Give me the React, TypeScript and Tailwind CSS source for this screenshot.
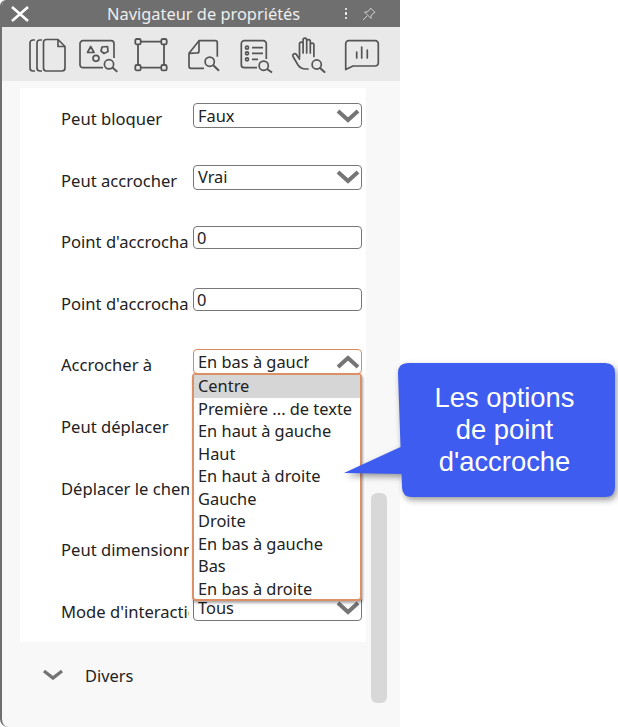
const font = { fontFamily: '"Noto Sans", "Open Sans", sans-serif' };

const options = [
  'Centre',
  'Première ... de texte',
  'En haut à gauche',
  'Haut',
  'En haut à droite',
  'Gauche',
  'Droite',
  'En bas à gauche',
  'Bas',
  'En bas à droite',
];

function Chevron({ up = false }: { up?: boolean }) {
  return (
    <svg width="24" height="14" viewBox="0 0 24 14" fill="none" stroke="#757575" strokeWidth="4">
      <path d={up ? 'M2 12 L12 3 L22 12' : 'M2 2 L12 11 L22 2'} />
    </svg>
  );
}

function Select({ value, open = false }: { value: string; open?: boolean }) {
  return (
    <div
      className={`flex h-[25px] w-[169px] items-center justify-between rounded-[4px] border bg-white pl-[4px] pr-[1px] ${open ? 'border-[#d98a5f]' : 'border-[#777777]'}`}
    >
      <span className="w-[111px] overflow-hidden whitespace-nowrap text-[16.4px] leading-[22px] text-[#222222]">
        {value}
      </span>
      <Chevron up={open} />
    </div>
  );
}

function Label({ text }: { text: string }) {
  return (
    <div className="mr-[4px] mt-[5px] w-[128px] overflow-hidden whitespace-nowrap text-[16.6px] leading-[22px] text-[#222222]">
      {text}
    </div>
  );
}

function Field({ value }: { value: string }) {
  return (
    <div className="flex h-[23px] w-[169px] items-center rounded-[4px] border border-[#777777] bg-white pl-[3px] pt-[1px] text-[16.4px] leading-[22px] text-[#222222]">
      {value}
    </div>
  );
}

function Toolbar() {
  return (
    <div className="flex h-[54px] items-center gap-[12.6px] bg-[#e9e9e9] pl-[24px]">
      <svg width="40" height="40" viewBox="0 0 40 40" fill="none" stroke="#555555" strokeWidth="1.7" strokeLinejoin="round">
        <path d="M9 6 H7 a3 3 0 0 0 -3 3 V34 a3 3 0 0 0 3 3 H9" />
        <path d="M16 6 H14 a3 3 0 0 0 -3 3 V34 a3 3 0 0 0 3 3 H16" />
        <path d="M20.5 5.5 H32 L39 12.5 V34 a3 3 0 0 1 -3 3 H20.5 a3 3 0 0 1 -3 -3 V8.5 a3 3 0 0 1 3 -3 Z" />
        <path d="M32 5.5 V12.5 H39" />
      </svg>
      <svg width="40" height="40" viewBox="0 0 40 40" fill="none" stroke="#555555" strokeWidth="1.7" strokeLinejoin="round">
        <path d="M24 33.7 H4 a3 3 0 0 1 -3 -3 V9.7 a3 3 0 0 1 3 -3 H32 a3 3 0 0 1 3 3 V24" />
        <path d="M11.7 12.5 L15 18.5 H8.5 Z" />
        <path d="M23 13 L28.5 12.5 L29 17.5 L25 19.5 L22 17 Z" />
        <circle cx="17" cy="24.3" r="3" />
        <circle cx="30" cy="30.3" r="4.6" />
        <path d="M33.4 33.6 L38.3 37.7" strokeWidth="2" />
      </svg>
      <svg width="40" height="40" viewBox="0 0 40 40" fill="none" stroke="#555555" strokeWidth="1.8">
        <path d="M7 7.7 H33 M7 33.7 H33 M7 7.7 V33.7 M33 7.7 V33.7" />
        <rect x="4.3" y="5" width="5.4" height="5.4" rx="1.5" fill="#e9e9e9" />
        <rect x="30.3" y="5" width="5.4" height="5.4" rx="1.5" fill="#e9e9e9" />
        <rect x="4.3" y="31" width="5.4" height="5.4" rx="1.5" fill="#e9e9e9" />
        <rect x="30.3" y="31" width="5.4" height="5.4" rx="1.5" fill="#e9e9e9" />
      </svg>
      <svg width="40" height="40" viewBox="0 0 40 40" fill="none" stroke="#555555" strokeWidth="1.7" strokeLinejoin="round">
        <path d="M20 34.3 H7 a2 2 0 0 1 -2 -2 V19.3 L15 6.7 H31.3 a2 2 0 0 1 2 2 V22.7" />
        <path d="M15 6.7 V17 a2 2 0 0 1 -2 2 L5 19.3" />
        <circle cx="25.7" cy="27.7" r="4.6" />
        <path d="M29 31 L35 36.7" strokeWidth="2" />
      </svg>
      <svg width="40" height="40" viewBox="0 0 40 40" fill="none" stroke="#555555" strokeWidth="1.7" strokeLinejoin="round">
        <path d="M21 33.7 H8.3 a3 3 0 0 1 -3 -3 V9.7 a3 3 0 0 1 3 -3 H27.3 a3 3 0 0 1 3 3 V25" />
        <circle cx="11" cy="13.7" r="1.5" />
        <circle cx="11" cy="19.3" r="1.5" />
        <circle cx="11" cy="25.3" r="1.5" />
        <path d="M16 13.7 H27 M16 19.3 H27 M16 25.3 H22" />
        <circle cx="27.7" cy="31.7" r="4.6" />
        <path d="M31 35 L36 38.5" strokeWidth="2" />
      </svg>
      <svg width="40" height="40" viewBox="0 0 40 40" fill="none" stroke="#555555" strokeWidth="1.7" strokeLinejoin="round" strokeLinecap="round">
        <path d="M10.5 23 V10 a1.8 1.8 0 0 1 3.6 0 V19 V6 a1.8 1.8 0 0 1 3.6 0 V19 V7.5 a1.8 1.8 0 0 1 3.6 0 V19 V11 a1.8 1.8 0 0 1 3.6 0 V22.5" />
        <path d="M10.5 25 L7 20 a2 2 0 0 0 -3 2.5 L9 31 c2 3 5 4 8 4 h2" />
        <circle cx="27.7" cy="30.5" r="4.6" />
        <path d="M31 34 L35.5 38" strokeWidth="2" />
      </svg>
      <svg width="40" height="40" viewBox="0 0 40 40" fill="none" stroke="#555555" strokeWidth="1.7" strokeLinejoin="round" strokeLinecap="round">
        <path d="M6.7 6.7 H33.3 a3 3 0 0 1 3 3 V29 a3 3 0 0 1 -3 3 H11 L3.7 35.5 V9.7 a3 3 0 0 1 3 -3 Z" />
        <path d="M14.7 18 V24 M19.7 13 V24 M25.3 16 V24" />
      </svg>
    </div>
  );
}

export default function App() {
  return (
    <div className="relative h-[727px] w-[618px] overflow-hidden bg-white" style={font}>
      <div className="flex h-[727px] w-[400px] flex-col overflow-hidden rounded-tl-[6px] rounded-bl-[8px] border-l-2 border-[#6f6f6f] bg-[#f8f8f8]">
        <div className="-ml-[2px] flex h-[27px] items-center bg-[#6f6f6f] pl-[11px]">
          <svg width="18" height="16" viewBox="0 0 18 16" fill="none" stroke="#ffffff" strokeWidth="2.6">
            <path d="M1 1 L17 15 M17 1 L1 15" />
          </svg>
          <div className="ml-[78px] w-[193px] whitespace-nowrap text-[16.4px] leading-[22px] text-[#eeeeee]">Navigateur de propriétés</div>
          <div className="ml-[44.5px] flex flex-col gap-[2px]">
            <span className="h-[2.5px] w-[2.5px] rounded-full bg-white" />
            <span className="h-[2.5px] w-[2.5px] rounded-full bg-white" />
            <span className="h-[2.5px] w-[2.5px] rounded-full bg-white" />
          </div>
          <svg className="ml-[15px]" width="14" height="14" viewBox="0 0 14 14" fill="none" stroke="#cfcfcf" strokeWidth="1">
            <path d="M8.5 1 L13 5.5 L11.5 6 L9 9 L9 11.5 L2.5 5 L5 5 L8 2.5 Z M5 9 L1 13" />
          </svg>
        </div>
        <Toolbar />
        <div className="flex flex-1 pl-[18px] pt-[7px]">
          <div className="flex w-[346px] flex-col">
            <div className="flex flex-col gap-[36.6px] bg-white pb-[21px] pl-[41px] pt-[15px]">
              <div className="flex h-[25px]">
                <Label text="Peut bloquer" />
                <Select value="Faux" />
              </div>
              <div className="flex h-[25px]">
                <Label text="Peut accrocher" />
                <Select value="Vrai" />
              </div>
              <div className="flex h-[25px]">
                <Label text="Point d'accrochage X" />
                <Field value="0" />
              </div>
              <div className="flex h-[25px]">
                <Label text="Point d'accrochage Y" />
                <Field value="0" />
              </div>
              <div className="relative z-10 flex h-[25px]">
                <Label text="Accrocher à" />
                <Select value="En bas à gauche" open />
                <div className="absolute left-[131px] top-[24px] h-[228px] w-[170px] rounded-[4px] border-2 border-[#dc9068] bg-white text-[16.4px] text-[#222222] shadow-[1px_2px_3px_rgba(0,0,0,0.35)]">
                  {options.map((o, i) => (
                    <div
                      key={o}
                      className={`h-[22.5px] whitespace-nowrap pl-[4px] leading-[21px] ${i === 0 ? 'bg-[#d6d6d6]' : ''}`}
                    >
                      {o}
                    </div>
                  ))}
                </div>
              </div>
              <div className="flex h-[25px]">
                <Label text="Peut déplacer" />
                <Select value="Vrai" />
              </div>
              <div className="flex h-[25px]">
                <Label text="Déplacer le chemin" />
                <Select value="Vrai" />
              </div>
              <div className="flex h-[25px]">
                <Label text="Peut dimensionner" />
                <Select value="Vrai" />
              </div>
              <div className="flex h-[25px]">
                <Label text="Mode d'interaction" />
                <Select value="Tous" />
              </div>
            </div>
            <div className="mt-[23px] flex items-center pl-[22px] text-[16.4px] leading-[22px] text-[#222222]">
              <svg className="-mt-[3px]" width="22" height="11" viewBox="0 0 22 11" fill="none" stroke="#757575" strokeWidth="3.4">
                <path d="M2 2 L11 9 L20 2" />
              </svg>
              <span className="ml-[21px]">Divers</span>
            </div>
          </div>
          <div className="ml-[5px] mt-[405px] h-[210px] w-[16px] rounded-[6px] bg-[#d8d8d8]" />
        </div>
      </div>

      <div className="absolute left-[340px] top-[360px] z-20 h-[142px] w-[278px]">
        <svg className="absolute inset-0 drop-shadow-[2px_3px_3px_rgba(0,0,0,0.4)]" width="278" height="142" viewBox="0 0 278 142">
          <path
            d="M68 3 H265 Q275 3 275 13 V127 Q275 137 265 137 H72 Q62 137 62 127 L61.5 114 L4 113 L60.5 87 L58 13 Q58 3 68 3 Z"
            fill="#3f5cf0"
          />
        </svg>
        <div
          className="absolute left-[56px] top-[22px] w-[217px] text-center text-[27.4px] leading-[32px] text-white"
          style={{ fontFamily: '"Liberation Sans", Arial, sans-serif' }}
        >
          Les options
          <br />
          de point
          <br />
          d'accroche
        </div>
      </div>
    </div>
  );
}
